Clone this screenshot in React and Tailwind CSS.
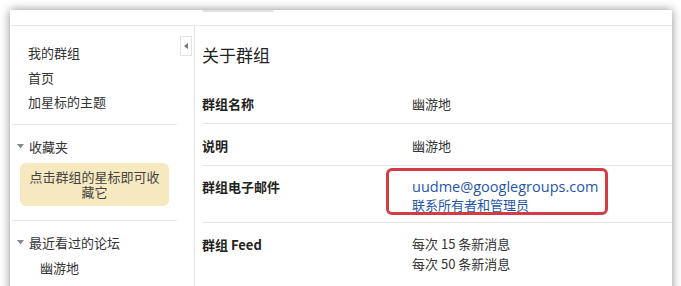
import React from 'react';

const font = { fontFamily: '"Noto Sans CJK SC", "Noto Sans", sans-serif' };

const Caret = () => (
  <svg width="7" height="5" viewBox="0 0 7 5" className="mr-[5px] shrink-0">
    <path d="M0 0 L7 0 L3.5 4.5 Z" fill="#8a8a8a" />
  </svg>
);

const Sidebar = () => (
  <div className="relative w-[185px] shrink-0 border-r border-[#e4e4e4] pt-[15px]">
    {/* collapse handle */}
    <div className="absolute right-[2px] top-[10px] flex h-[20px] w-[12px] items-center justify-center border border-[#e2e2e2] bg-white">
      <svg width="4" height="6" viewBox="0 0 4 6">
        <path d="M4 0 L4 6 L0 3 Z" fill="#777" />
      </svg>
    </div>

    <div className="pl-[18px] text-[13px] leading-[24.5px] text-[#333]">
      <div>我的群组</div>
      <div>首页</div>
      <div>加星标的主题</div>
    </div>

    <div className="ml-[2px] mr-[17px] mt-[9px] border-t border-[#e6e6e6]" />

    <div className="mt-[13px] flex items-center pl-[7px] text-[13px] leading-[17px] text-[#333]">
      <Caret />
      <span>收藏夹</span>
    </div>
    <div className="ml-[10px] mr-[25px] mt-[8px] rounded-[6px] bg-[#f7e9bf] px-[7px] py-[6px] text-center text-[13px] leading-[15.5px] text-[#444]">
      点击群组的星标即可收藏它
    </div>

    <div className="ml-[2px] mr-[17px] mt-[14px] border-t border-[#e6e6e6]" />

    <div className="mt-[13px] flex items-center pl-[7px] text-[13px] leading-[17px] text-[#333]">
      <Caret />
      <span>最近看过的论坛</span>
    </div>
    <div className="mt-[8px] pl-[30px] text-[13px] leading-[17px] text-[#333]">幽游地</div>
  </div>
);

const Row = ({ label, children, className = '', last = false }) => (
  <div className={`grid grid-cols-[210px_1fr] ${last ? '' : 'border-b border-[#e6e6e6]'} ${className}`}>
    <div className="text-[13px] font-bold leading-[17px] text-[#222]">{label}</div>
    <div className="relative text-[13px] text-[#333]">{children}</div>
  </div>
);

export default function App() {
  return (
    <div className="h-[286px] w-[681px] overflow-hidden bg-white" style={font}>
      <div className="ml-[10px] mt-[10px] h-[290px] w-[662px] bg-white shadow-[0_0_9px_rgba(0,0,0,0.45)]">
        {/* header strip */}
        <div className="h-[16px] border-b border-[#e8e8e8]">
          <div className="ml-[192px] h-[2px] w-[72px] rounded-b-[3px] bg-[#e2e2e2]" />
        </div>

        <div className="flex h-[274px]">
          <Sidebar />

          <div className="flex-1 pl-[7px]">
            <div className="h-[56px] pt-[17px] text-[17px] leading-[24px] text-[#222]">关于群组</div>

            <Row label="群组名称" className="h-[42px] pt-[13px]">
              <div className="leading-[17px]">幽游地</div>
            </Row>
            <Row label="说明" className="h-[42px] pt-[13px]">
              <div className="leading-[17px]">幽游地</div>
            </Row>
            <Row label="群组电子邮件" className="h-[57px] pt-[12px]">
              <div className="leading-[18px] text-[#1f56a8]">
                <div className="text-[14.5px]" style={{ fontFamily: '"Open Sans", "Noto Sans CJK SC", sans-serif' }}>
                  uudme@googlegroups.com
                </div>
                <div>联系所有者和管理员</div>
              </div>
              <div className="absolute left-[-26px] top-[-10px] h-[47px] w-[222px] rounded-[6px] border-[3px] border-[#d23c44]" />
            </Row>
            <Row label="群组 Feed" className="pt-[13px]" last>
              <div className="mt-[-2px] leading-[20px]">
                <div>每次 15 条新消息</div>
                <div>每次 50 条新消息</div>
              </div>
            </Row>
          </div>
        </div>
      </div>
    </div>
  );
}
